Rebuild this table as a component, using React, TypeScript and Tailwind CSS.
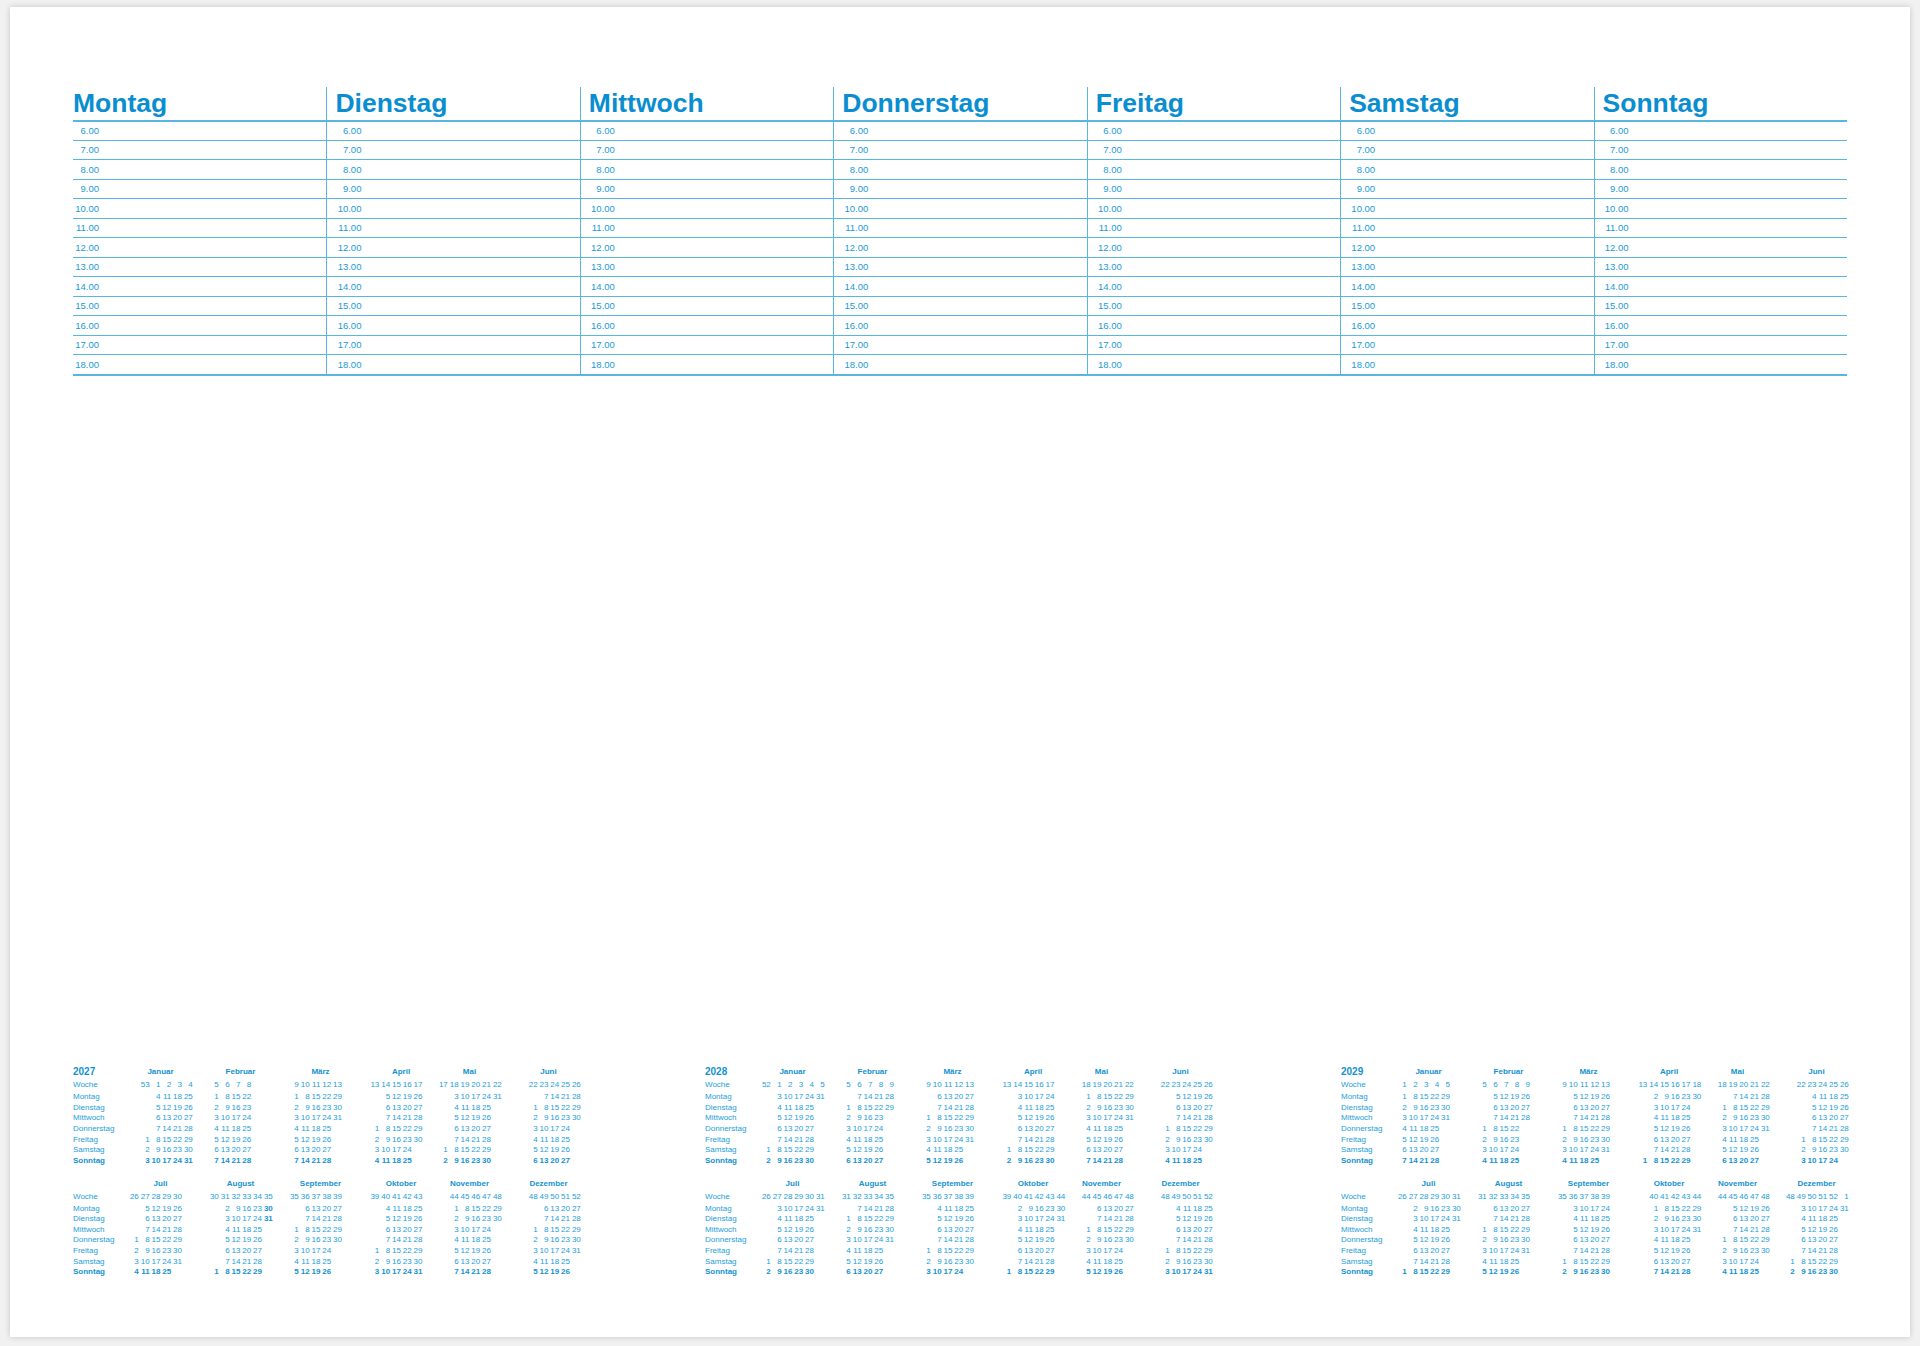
import React from 'react';

const days = ['Montag', 'Dienstag', 'Mittwoch', 'Donnerstag', 'Freitag', 'Samstag', 'Sonntag'];
const hours = ['6.00', '7.00', '8.00', '9.00', '10.00', '11.00', '12.00', '13.00', '14.00', '15.00', '16.00', '17.00', '18.00'];
const monthNames = ['Januar', 'Februar', 'März', 'April', 'Mai', 'Juni', 'Juli', 'August', 'September', 'Oktober', 'November', 'Dezember'];

// pitch from one month slot to the next
const slotWidths = ['w-[80px]', 'w-[80px]', 'w-[80.5px]', 'w-[68.5px]', 'w-[79px]', 'w-[65px]'];
const offsetClass: Record<number, string> = { 0: '', 1: 'pl-[10.8px]', 2: 'pl-[21.6px]' };

// odd ones out in the print
const shiftedMonths: Record<string, number> = { '2027-0': 1, '2029-9': 1 };
const boldDays: Record<string, boolean> = { '2027-7-30': true, '2027-7-31': true };

type Week = { wk: number; days: (number | null)[] };

function isoWeek(y: number, m: number, d: number) {
  const t = new Date(Date.UTC(y, m, d));
  const wd = t.getUTCDay() || 7;
  t.setUTCDate(t.getUTCDate() + 4 - wd);
  const start = Date.UTC(t.getUTCFullYear(), 0, 1);
  return Math.ceil(((t.getTime() - start) / 86400000 + 1) / 7);
}

function buildMonth(year: number, month: number): Week[] {
  const count = new Date(Date.UTC(year, month + 1, 0)).getUTCDate();
  const weeks: Week[] = [];
  for (let d = 1; d <= count; d++) {
    const wd = (new Date(Date.UTC(year, month, d)).getUTCDay() + 6) % 7;
    if (d === 1 || wd === 0) weeks.push({ wk: isoWeek(year, month, d), days: Array(7).fill(null) });
    weeks[weeks.length - 1].days[wd] = d;
  }
  return weeks;
}

function MonthBlock({ year, month, slot }: { year: number; month: number; slot: number }) {
  const weeks = buildMonth(year, month);
  const shift = shiftedMonths[`${year}-${month}`] ?? (slot >= 4 ? 6 - weeks.length : 0);
  return (
    <div className={`${slotWidths[slot]} shrink-0 flex flex-col`}>
      <div className="h-[13px] w-[65px] text-center font-bold leading-[13px] text-[#1592d0]">{monthNames[month]}</div>
      <div className={`h-[14px] flex ${offsetClass[shift]}`}>
        {weeks.map((w, i) => (
          <span key={i} className="w-[10.8px] text-right leading-[13px]">{w.wk}</span>
        ))}
      </div>
      {days.map((_, di) => (
        <div key={di} className={`h-[10.67px] flex ${offsetClass[shift]} ${di === 6 ? 'font-bold text-[#1592d0]' : ''}`}>
          {weeks.map((w, i) => {
            const d = w.days[di];
            const bold = d !== null && boldDays[`${year}-${month}-${d}`];
            return (
              <span key={i} className={`w-[10.8px] text-right leading-[10.67px] ${bold ? 'font-bold text-[#1592d0]' : ''}`}>
                {d ?? ''}
              </span>
            );
          })}
        </div>
      ))}
    </div>
  );
}

function HalfYear({ year, half }: { year: number; half: 0 | 1 }) {
  return (
    <div className="flex">
      <div className="w-[55px] shrink-0 flex flex-col">
        <div className="h-[13px] text-[10px] font-bold leading-[13px] text-[#1592d0]">{half === 0 ? year : ''}</div>
        <div className="h-[14px] leading-[13px]">Woche</div>
        {days.map((d, i) => (
          <div key={d} className={`h-[10.67px] leading-[10.67px] ${i === 6 ? 'font-bold text-[#1592d0]' : ''}`}>{d}</div>
        ))}
      </div>
      {[0, 1, 2, 3, 4, 5].map((s) => (
        <MonthBlock key={s} year={year} month={half * 6 + s} slot={s} />
      ))}
    </div>
  );
}

function YearCalendar({ year }: { year: number }) {
  return (
    <div className="w-[508px] flex flex-col text-[8px] text-[#229ed9]">
      <HalfYear year={year} half={0} />
      <div className="mt-[10px]">
        <HalfYear year={year} half={1} />
      </div>
    </div>
  );
}

export default function App() {
  return (
    <div className="min-h-screen bg-[#f1f1f1] pt-[7px] pl-[10px] font-['Liberation_Sans',Arial,sans-serif]">
      <div className="w-[1900px] h-[1330px] bg-white shadow-[0_0_6px_rgba(0,0,0,0.18)] pl-[63px] pt-[80px]">
        <div className="grid grid-cols-7 w-[1774px]">
          {days.map((day, ci) => (
            <div key={day} className={`flex flex-col ${ci > 0 ? 'border-l-[1.5px] border-[#58b6e2]' : ''}`}>
              <div className={`h-[33px] flex items-end pb-[3.6px] ${ci > 0 ? 'pl-[8px]' : ''}`}>
                <span className="text-[26.5px] leading-none font-bold text-[#0a8ecf]">{day}</span>
              </div>
              <div className="border-b-2 border-[#58b6e2]">
                {hours.map((h, ri) => (
                  <div
                    key={h}
                    className={`box-border h-[19.54px] border-[#58b6e2] flex items-center ${ri === 0 ? 'border-t-2' : 'border-t-[1.5px]'}`}
                  >
                    <span className={`w-[26px] text-right text-[9.5px] leading-none text-[#1a9ad7] ${ci > 0 ? 'ml-[8px]' : ''}`}>{h}</span>
                  </div>
                ))}
              </div>
            </div>
          ))}
        </div>

        <div className="mt-[689px] flex">
          <div className="w-[632px] shrink-0">
            <YearCalendar year={2027} />
          </div>
          <div className="w-[636px] shrink-0">
            <YearCalendar year={2028} />
          </div>
          <div>
            <YearCalendar year={2029} />
          </div>
        </div>
      </div>
    </div>
  );
}
